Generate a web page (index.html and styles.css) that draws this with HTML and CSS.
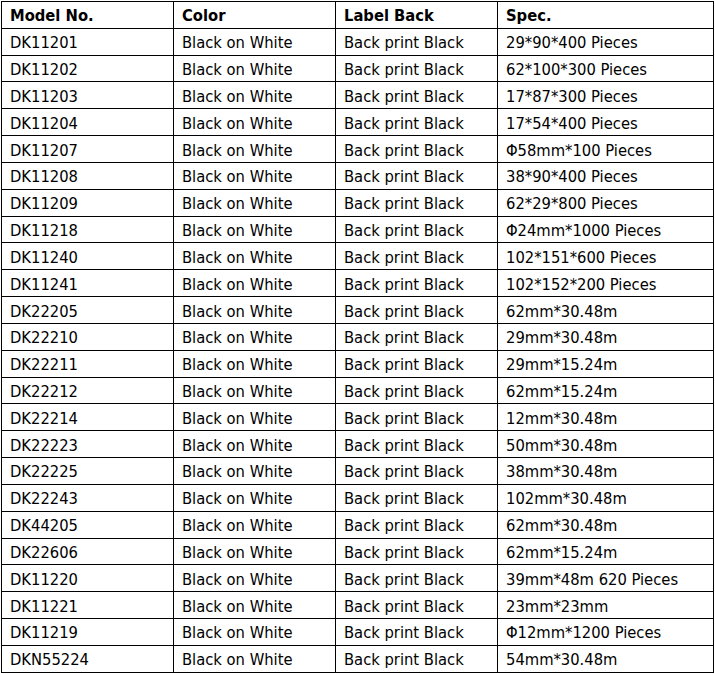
FILE: index.html
```html
<!DOCTYPE html>
<html>
<head>
<meta charset="utf-8">
<link rel="stylesheet" href="styles.css">
</head>
<body>
<table class="spec-table">
<colgroup>
<col class="c1"><col class="c2"><col class="c3"><col class="c4">
</colgroup>
<thead>
<tr><th>Model No.</th><th>Color</th><th>Label Back</th><th>Spec.</th></tr>
</thead>
<tbody>
<tr><td>DK11201</td><td>Black on White</td><td>Back print Black</td><td>29*90*400 Pieces</td></tr>
<tr><td>DK11202</td><td>Black on White</td><td>Back print Black</td><td>62*100*300 Pieces</td></tr>
<tr><td>DK11203</td><td>Black on White</td><td>Back print Black</td><td>17*87*300 Pieces</td></tr>
<tr><td>DK11204</td><td>Black on White</td><td>Back print Black</td><td>17*54*400 Pieces</td></tr>
<tr><td>DK11207</td><td>Black on White</td><td>Back print Black</td><td>Φ58mm*100 Pieces</td></tr>
<tr><td>DK11208</td><td>Black on White</td><td>Back print Black</td><td>38*90*400 Pieces</td></tr>
<tr><td>DK11209</td><td>Black on White</td><td>Back print Black</td><td>62*29*800 Pieces</td></tr>
<tr><td>DK11218</td><td>Black on White</td><td>Back print Black</td><td>Φ24mm*1000 Pieces</td></tr>
<tr><td>DK11240</td><td>Black on White</td><td>Back print Black</td><td>102*151*600 Pieces</td></tr>
<tr><td>DK11241</td><td>Black on White</td><td>Back print Black</td><td>102*152*200 Pieces</td></tr>
<tr><td>DK22205</td><td>Black on White</td><td>Back print Black</td><td>62mm*30.48m</td></tr>
<tr><td>DK22210</td><td>Black on White</td><td>Back print Black</td><td>29mm*30.48m</td></tr>
<tr><td>DK22211</td><td>Black on White</td><td>Back print Black</td><td>29mm*15.24m</td></tr>
<tr><td>DK22212</td><td>Black on White</td><td>Back print Black</td><td>62mm*15.24m</td></tr>
<tr><td>DK22214</td><td>Black on White</td><td>Back print Black</td><td>12mm*30.48m</td></tr>
<tr><td>DK22223</td><td>Black on White</td><td>Back print Black</td><td>50mm*30.48m</td></tr>
<tr><td>DK22225</td><td>Black on White</td><td>Back print Black</td><td>38mm*30.48m</td></tr>
<tr><td>DK22243</td><td>Black on White</td><td>Back print Black</td><td>102mm*30.48m</td></tr>
<tr><td>DK44205</td><td>Black on White</td><td>Back print Black</td><td>62mm*30.48m</td></tr>
<tr><td>DK22606</td><td>Black on White</td><td>Back print Black</td><td>62mm*15.24m</td></tr>
<tr><td>DK11220</td><td>Black on White</td><td>Back print Black</td><td>39mm*48m 620 Pieces</td></tr>
<tr><td>DK11221</td><td>Black on White</td><td>Back print Black</td><td>23mm*23mm</td></tr>
<tr><td>DK11219</td><td>Black on White</td><td>Back print Black</td><td>Φ12mm*1200 Pieces</td></tr>
<tr><td>DKN55224</td><td>Black on White</td><td>Back print Black</td><td>54mm*30.48m</td></tr>
</tbody>
</table>
</body>
</html>
```
FILE: styles.css
```css
html, body {
  margin: 0;
  padding: 0;
  background: #fff;
}
body {
  padding: 1px 0 0 1px;
}
.spec-table {
  border-collapse: collapse;
  table-layout: fixed;
  width: 712px;
  font-family: "DejaVu Sans Condensed", "DejaVu Sans", Verdana, sans-serif;
  font-size: 16.4px;
  color: #000;
}
.c1 { width: 172px; }
.c2 { width: 162px; }
.c3 { width: 162px; }
.c4 { width: 216px; }
.spec-table th,
.spec-table td {
  border: 1px solid #000;
  height: 23.84px;
  padding: 2px 0 0 8px;
  text-align: left;
  vertical-align: middle;
  white-space: nowrap;
}
.spec-table th {
  font-weight: bold;
}
```
